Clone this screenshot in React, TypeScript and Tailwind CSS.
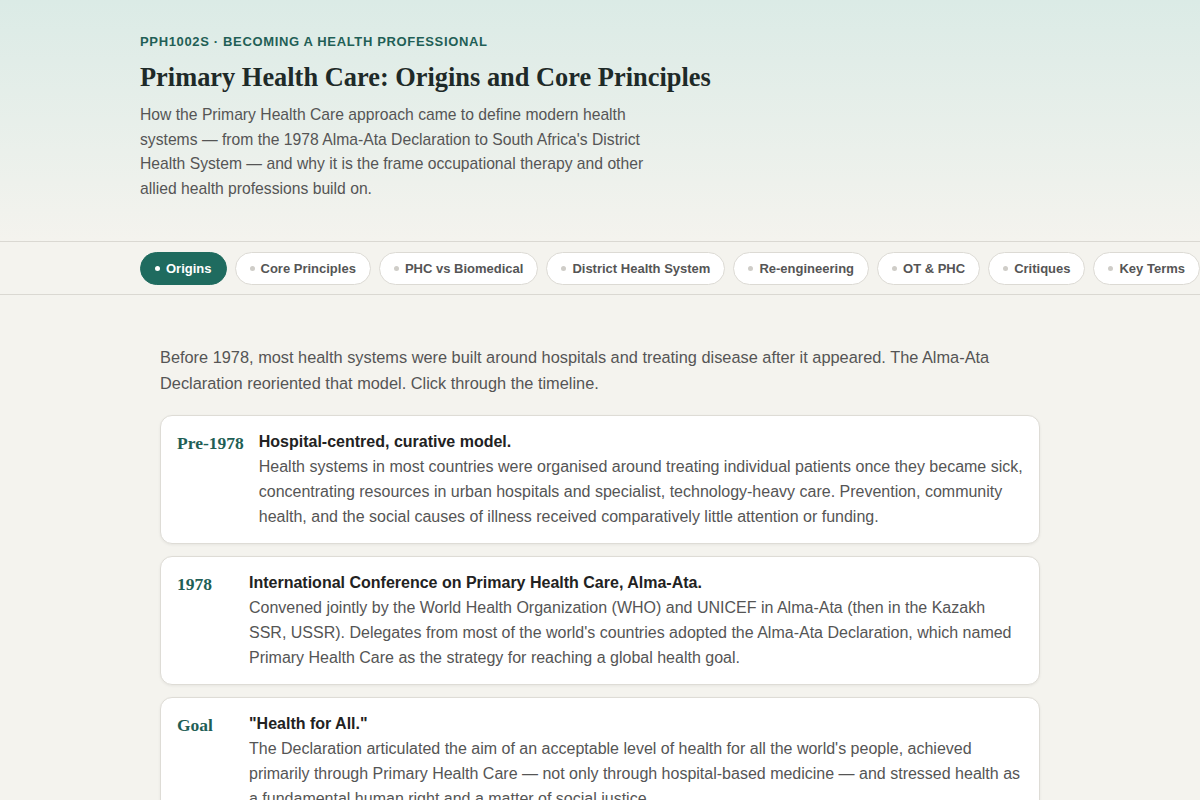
const tabs = [
  'Origins',
  'Core Principles',
  'PHC vs Biomedical',
  'District Health System',
  'Re-engineering',
  'OT & PHC',
  'Critiques',
  'Key Terms',
]

const timeline = [
  {
    label: 'Pre-1978',
    title: 'Hospital-centred, curative model.',
    body: 'Health systems in most countries were organised around treating individual patients once they became sick, concentrating resources in urban hospitals and specialist, technology-heavy care. Prevention, community health, and the social causes of illness received comparatively little attention or funding.',
  },
  {
    label: '1978',
    title: 'International Conference on Primary Health Care, Alma-Ata.',
    body: "Convened jointly by the World Health Organization (WHO) and UNICEF in Alma-Ata (then in the Kazakh SSR, USSR). Delegates from most of the world's countries adopted the Alma-Ata Declaration, which named Primary Health Care as the strategy for reaching a global health goal.",
  },
  {
    label: 'Goal',
    title: '"Health for All."',
    body: "The Declaration articulated the aim of an acceptable level of health for all the world's people, achieved primarily through Primary Health Care — not only through hospital-based medicine — and stressed health as a fundamental human right and a matter of social justice.",
  },
]

export default function App() {
  const sans = { fontFamily: '"Liberation Sans", Arial, sans-serif' }
  const serif = { fontFamily: '"Liberation Serif", "Times New Roman", serif' }
  return (
    <div className="min-h-screen bg-[#f4f3ee] text-[#222]" style={sans}>
      {/* Header */}
      <header className="bg-gradient-to-b from-[#dbebe6] to-[#f4f3ee] border-b border-[#dad8d2]">
        <div className="max-w-[920px] mx-auto pt-[32px] pb-[40px]">
          <p className="text-[13px] font-bold tracking-[0.05em] uppercase text-[#1f5f56] leading-5">
            PPH1002S · Becoming a Health Professional
          </p>
          <h1 className="mt-[9px] text-[26.4px] font-bold leading-[32px] text-[#1e2a28]" style={serif}>
            Primary Health Care: Origins and Core Principles
          </h1>
          <p className="mt-[10px] max-w-[520px] text-[15.7px] leading-[24.5px] text-[#555]">
            How the Primary Health Care approach came to define modern health systems — from the 1978
            Alma-Ata Declaration to South Africa's District Health System — and why it is the frame
            occupational therapy and other allied health professions build on.
          </p>
        </div>
      </header>

      {/* Tabs */}
      <nav className="border-b border-[#dad8d2] bg-[#f4f3ee] overflow-hidden">
        <div className="max-w-[920px] mx-auto pt-[10px] pb-[9px]">
          <div className="flex gap-2 whitespace-nowrap">
            {tabs.map((t, i) =>
              i === 0 ? (
                <button
                  key={t}
                  className="h-[33px] px-[14px] rounded-full bg-[#1f6b5f] text-white text-[13px] font-bold flex items-center gap-[6px] border border-[#1f6b5f] shrink-0"
                >
                  <span className="w-[5px] h-[5px] rounded-full bg-white" />
                  {t}
                </button>
              ) : (
                <button
                  key={t}
                  className="h-[33px] px-[14px] rounded-full bg-white text-[#555] text-[13px] font-bold flex items-center gap-[6px] border border-[#dcdad4] shrink-0"
                >
                  <span className="w-[5px] h-[5px] rounded-full bg-[#cfcdc8]" />
                  {t}
                </button>
              )
            )}
          </div>
        </div>
      </nav>

      {/* Content */}
      <main className="max-w-[880px] mx-auto pt-[49px] pb-10">
        <p className="text-[16.35px] leading-[26px] text-[#555] mb-[19px]">
          Before 1978, most health systems were built around hospitals and treating disease after it
          appeared. The Alma-Ata Declaration reoriented that model. Click through the timeline.
        </p>
        <div className="flex flex-col gap-[12px]">
          {timeline.map((item) => (
            <div
              key={item.label}
              className="bg-white border border-[#dedcd6] rounded-[12px] shadow-[0_1px_3px_rgba(0,0,0,0.06)] px-4 pt-[13px] pb-[14px] flex gap-[15px]"
            >
              <div className="min-w-[57px] text-[17.5px] font-bold text-[#1f5f56] leading-[25px] pt-[2px]" style={serif}>
                {item.label}
              </div>
              <div className="flex-1">
                <h3 className="text-[16px] font-bold leading-[25px] text-[#222]">{item.title}</h3>
                <p className="text-[16px] leading-[25px] text-[#555]">{item.body}</p>
              </div>
            </div>
          ))}
        </div>
      </main>
    </div>
  )
}
